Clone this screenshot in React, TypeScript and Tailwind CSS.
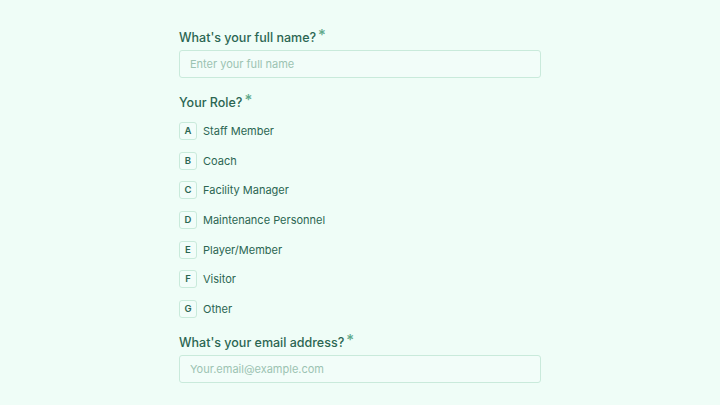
import {useState} from 'react'

const roles = [
    {key: 'A', label: 'Staff Member'},
    {key: 'B', label: 'Coach'},
    {key: 'C', label: 'Facility Manager'},
    {key: 'D', label: 'Maintenance Personnel'},
    {key: 'E', label: 'Player/Member'},
    {key: 'F', label: 'Visitor'},
    {key: 'G', label: 'Other'},
]

function Label({text}: {text: string}) {
    return (
        <h2 className="text-[12.5px] leading-[20px] font-medium text-[#2b6652]">
            {text}
            <span className="ml-[2px] relative top-[-2px] text-[15px] leading-none text-[#5fa98b]">*</span>
        </h2>
    )
}

function App() {
    const [name, setName] = useState('')
    const [email, setEmail] = useState('')
    const [role, setRole] = useState<string | null>(null)

    return (
        <div
            className="min-h-[405px] w-full bg-[#effdf7] text-[#2b6652]"
            style={{fontFamily: 'Inter, "Noto Sans", sans-serif'}}
        >
            <form className="mx-auto w-[362px] pt-[28px] flex flex-col">
                <Label text="What's your full name?" />
                <input
                    value={name}
                    onChange={(e) => setName(e.target.value)}
                    placeholder="Enter your full name"
                    className="mt-[2px] h-[28px] w-full rounded-[3px] border border-[#c9eadb] bg-[#f2fdf9] px-[10px] text-[11px] text-[#2b6652] placeholder:text-[#9cc3b2] outline-none"
                />

                <div className="mt-[15px]">
                    <Label text="Your Role?" />
                </div>
                <div className="mt-[9px] flex flex-col gap-[11.67px]">
                    {roles.map((r) => (
                        <button
                            key={r.key}
                            type="button"
                            onClick={() => setRole(r.key)}
                            className="flex items-center gap-[6px] text-left"
                        >
                            <span
                                className={
                                    role === r.key
                                        ? 'flex h-[18px] w-[18px] items-center justify-center rounded-[3px] border border-[#2b6652] bg-[#2b6652] text-[9.5px] font-semibold text-white'
                                        : 'flex h-[18px] w-[18px] items-center justify-center rounded-[3px] border border-[#c9eadb] bg-[#f2fdf9] text-[9.5px] font-semibold text-[#2b6652]'
                                }
                            >
                                {r.key}
                            </span>
                            <span className="text-[11px] leading-[18px] text-[#2b6652]">{r.label}</span>
                        </button>
                    ))}
                </div>

                <div className="mt-[15px]">
                    <Label text="What's your email address?" />
                </div>
                <input
                    type="email"
                    value={email}
                    onChange={(e) => setEmail(e.target.value)}
                    placeholder="Your.email@example.com"
                    className="mt-[2px] h-[28px] w-full rounded-[3px] border border-[#c9eadb] bg-[#f2fdf9] px-[10px] text-[11px] text-[#2b6652] placeholder:text-[#9cc3b2] outline-none"
                />
            </form>
        </div>
    )
}

export default App
